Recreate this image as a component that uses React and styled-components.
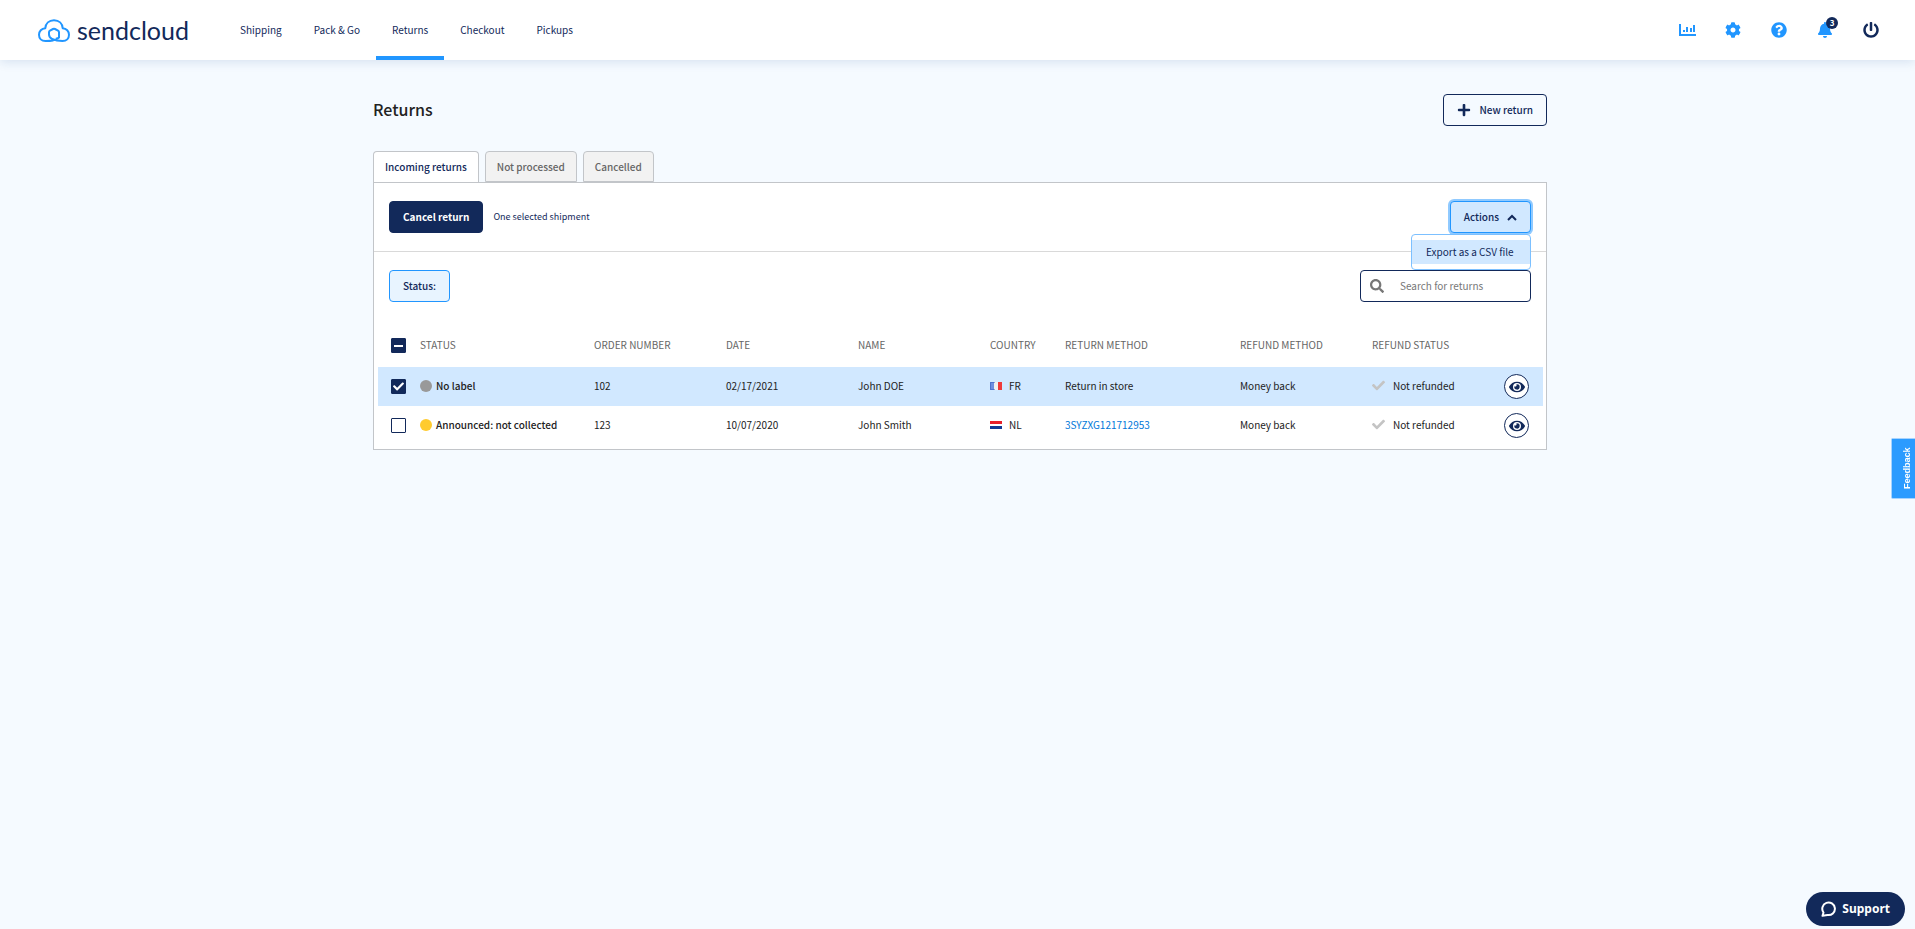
import React, { useEffect, useRef, useState } from "react";
import styled, { createGlobalStyle } from "styled-components";
import { FaCog, FaQuestionCircle, FaBell, FaPowerOff, FaPlus, FaSearch, FaEye, FaCheck } from "react-icons/fa";

const navy = "#12295a";
const blue = "#2196ff";
const paleBlue = "#d1e8ff";
const sans = '"Noto Sans CJK SC", "Noto Sans", sans-serif';

const GlobalStyle = createGlobalStyle`
  * { box-sizing: border-box; }
  body {
    margin: 0;
    background: #f5faff;
    color: #222;
    font: 10px/16px ${sans};
  }
  button, input { font: inherit; color: inherit; margin: 0; }
`;

const Header = styled.header`
  display: flex;
  align-items: center;
  height: 60px;
  padding: 0 32px 0 38px;
  background: #fff;
  box-shadow: 0 2px 10px rgba(30, 80, 150, 0.14);
`;

const Logo = styled.a`
  display: flex;
  align-items: center;
  gap: 7px;
  width: 186px;
  color: ${navy};
  font: 25px/30px Lato, sans-serif;
  text-decoration: none;
`;

const Nav = styled.nav`
  display: flex;
  height: 100%;
`;

const NavLink = styled.a`
  display: flex;
  align-items: center;
  padding: 4px 16px 0;
  border-bottom: 4px solid ${(p) => (p.$active ? blue : "transparent")};
  color: ${navy};
  text-decoration: none;
`;

const Tools = styled.div`
  display: flex;
  gap: 22px;
  margin-left: auto;
`;

const IconButton = styled.button`
  position: relative;
  display: grid;
  place-items: center;
  width: 24px;
  height: 24px;
  padding: 0;
  border: 0;
  background: none;
  color: ${(p) => (p.$dark ? navy : blue)};
`;

const Badge = styled.span`
  position: absolute;
  top: -1px;
  right: -1px;
  width: 12px;
  height: 12px;
  border-radius: 50%;
  background: ${navy};
  color: #fff;
  font-size: 8px;
  font-weight: 700;
  line-height: 12px;
  text-align: center;
`;

const Main = styled.main`
  max-width: 1179px;
  margin: 0 auto;
  padding: 34px 0 0 5px;
`;

const TitleRow = styled.div`
  display: flex;
  align-items: center;
  justify-content: space-between;
  margin-bottom: 25px;
`;

const Title = styled.h1`
  margin: 0;
  padding-bottom: 2px;
  font-size: 16px;
  line-height: 24px;
  font-weight: 500;
`;

const Button = styled.button`
  display: inline-flex;
  align-items: center;
  gap: 8px;
  height: 32px;
  padding: 0 13px;
  border: 1px solid ${navy};
  border-radius: 4px;
  background: transparent;
  color: ${navy};
  font-weight: 500;
`;

const PrimaryButton = styled(Button)`
  background: ${navy};
  color: #fff;
  font-weight: 700;
`;

const FilterButton = styled(Button)`
  border-color: ${blue};
  background: #e8f4ff;
`;

const ActionsButton = styled(Button)`
  border-color: ${blue};
  background: ${paleBlue};
  box-shadow: 0 0 0 2px #90caff;
`;

const Tabs = styled.div`
  display: flex;
  gap: 6px;
`;

const Tab = styled.button`
  height: 31px;
  padding: 0 11px;
  border: 1px solid #c2c5c9;
  border-bottom: ${(p) => (p.$active ? "0" : "1px solid #c2c5c9")};
  border-radius: 4px 4px 0 0;
  background: ${(p) => (p.$active ? "#fff" : "#f2f2f2")};
  color: ${(p) => (p.$active ? navy : "#666")};
  font-weight: 500;
`;

const Panel = styled.section`
  border: 1px solid #c2c5c9;
  background: #fff;
`;

const Toolbar = styled.div`
  display: flex;
  align-items: center;
  gap: 10px;
  padding: 18px 15px;
  border-bottom: ${(p) => (p.$divided ? "1px solid #d9d9d9" : "0")};
`;

const Selection = styled.span`
  color: ${navy};
  font-size: 9px;
`;

const Dropdown = styled.div`
  position: relative;
  margin-left: auto;
`;

const Menu = styled.div`
  position: absolute;
  top: 33px;
  right: 0;
  padding: 5px 0;
  border: 1px solid #7cc0ff;
  border-radius: 4px;
  background: #fff;
`;

const MenuItem = styled.button`
  display: block;
  width: 118px;
  height: 24px;
  padding: 0 14px;
  border: 0;
  background: ${paleBlue};
  color: ${navy};
  text-align: left;
  white-space: nowrap;
`;

const SearchField = styled.label`
  display: flex;
  align-items: center;
  gap: 16px;
  width: 171px;
  height: 32px;
  margin-left: auto;
  padding: 0 9px;
  border: 1px solid ${navy};
  border-radius: 4px;
  background: #fff;
  color: #777;
  svg { flex-shrink: 0; }
`;

const SearchInput = styled.input`
  flex: 1;
  min-width: 0;
  padding: 0;
  border: 0;
  outline: 0;
  background: none;
  &::placeholder { color: #777; opacity: 1; }
`;

const TableWrap = styled.div`
  padding: 4px 3px 4px 4px;
`;

const Table = styled.table`
  width: 100%;
  table-layout: fixed;
  border-collapse: collapse;
`;

const ControlHead = styled.th`
  height: 43px;
  padding: 0;
`;

const HeadCell = styled.th`
  height: 43px;
  padding: 0 0 2px;
  color: #666;
  font-weight: 400;
  text-align: left;
  text-transform: uppercase;
`;

const Row = styled.tr`
  background: ${(p) => (p.$selected ? paleBlue : "transparent")};
`;

const ControlCell = styled.td`
  height: 39px;
  padding: 0;
`;

const Cell = styled.td`
  height: 39px;
  padding: 0 0 2px;
  font-weight: ${(p) => (p.$strong ? 500 : 400)};
  white-space: nowrap;
`;

const Inline = styled.span`
  display: flex;
  align-items: center;
  gap: ${(p) => p.$gap}px;
`;

const Dot = styled.span`
  width: 12px;
  height: 12px;
  border-radius: 50%;
  background: ${(p) => p.$color};
`;

const CheckWrap = styled.span`
  position: relative;
  display: grid;
  place-items: center;
  width: 15px;
  height: 15px;
  margin-left: 13px;
  color: #fff;
  svg { position: absolute; pointer-events: none; }
`;

const CheckInput = styled.input`
  appearance: none;
  width: 15px;
  height: 15px;
  border: 1px solid ${navy};
  border-radius: 1px;
  background: #fff;
  &:checked, &:indeterminate { background: ${navy}; }
`;

const TrackingLink = styled.a`
  color: #0077d9;
  text-decoration: none;
`;

const ViewButton = styled.button`
  display: grid;
  place-items: center;
  width: 25px;
  height: 25px;
  padding: 0;
  border: 1px solid ${navy};
  border-radius: 50%;
  background: #fff;
  color: ${navy};
`;

const Feedback = styled.button`
  position: fixed;
  right: 0;
  top: 438px;
  width: 24px;
  height: 61px;
  padding: 0 8px 0 0;
  border: 1px solid #a6d3ff;
  border-left: 0;
  border-radius: 0 2px 2px 0;
  background: #2b9bff;
  color: #fff;
  font: 700 9px/15px "Liberation Sans", sans-serif;
  writing-mode: vertical-rl;
  rotate: 180deg;
`;

const Support = styled.button`
  position: fixed;
  right: 10px;
  bottom: 3px;
  display: flex;
  align-items: center;
  gap: 6px;
  height: 34px;
  padding: 0 15px;
  border: 0;
  border-radius: 17px;
  background: ${navy};
  color: #fff;
  font: 700 12px/16px "Noto Sans", sans-serif;
`;

const CloudMark = () => (
  <svg width="32" height="23" viewBox="0 0 32 23" fill="none" stroke={blue} strokeWidth="2" strokeLinecap="round" strokeLinejoin="round" aria-hidden="true">
    <path d="M15 21.500C12.500 22 10 22 7.500 22C3.500 22 1 19.300 1 15.700C1 12.300 3.600 9.400 7.300 9.200C7.600 4.500 11 1.200 16 1.200C21 1.200 24.400 4.500 24.700 9.200C28.400 9.400 31 12.300 31 15.700C31 19.300 28.500 22 24.500 22C21 22 17 21.300 14 19.800C12 18.800 11 17.500 11 15.500V13.200Q11 12.200 12 11.600L15 10Q16 9.500 17 10L20 11.600Q21 12.200 21 13.200V18.500Q20 19.500 18.500 19.500" />
  </svg>
);

const ChartIcon = () => (
  <svg width="17" height="13" viewBox="0 0 17 13" fill="currentColor" aria-hidden="true">
    <path d="M0 0h2v10h15v2H0zM4 6h2v2H4zM7 3h2v5H7zM11 4h2v4h-2zM14 1h2v7h-2z" />
  </svg>
);

const ChevronUp = () => (
  <svg width="10" height="7" viewBox="0 0 10 7" fill="none" stroke="currentColor" strokeWidth="2" aria-hidden="true">
    <path d="M1 6l4-4 4 4" />
  </svg>
);

const BubbleIcon = () => (
  <svg width="15" height="16" viewBox="0 0 15 16" fill="none" stroke="currentColor" strokeWidth="2" strokeLinejoin="round" aria-hidden="true">
    <path d="M1.500 14.800L2.500 11.500A6.300 6.300 0 1 1 6.500 14Z" />
  </svg>
);

const Flag = ({ code }) => (
  <svg width="12" height="8" viewBox="0 0 12 8" aria-hidden="true">
    {code === "FR" ? (
      <>
        <path fill="#6f8fe0" d="M0 0h4v8H0z" />
        <path fill="#f0f0f0" d="M4 0h4v8H4z" />
        <path fill="#ef3b3b" d="M8 0h4v8H8z" />
        <path fill="none" stroke="#3157b8" strokeOpacity="0.5" d="M5 .5H.5v7H5" />
      </>
    ) : (
      <>
        <path fill="#e8202a" d="M0 0h12v3H0z" />
        <path fill="#fff" d="M0 3h12v2H0z" />
        <path fill="#123a94" d="M0 5h12v3H0z" />
      </>
    )}
  </svg>
);

function Checkbox({ label, indeterminate = false, checked, onChange }) {
  const ref = useRef(null);
  useEffect(() => {
    ref.current.indeterminate = indeterminate;
  }, [indeterminate]);
  return (
    <CheckWrap>
      <CheckInput ref={ref} type="checkbox" aria-label={label} checked={checked} onChange={onChange} />
      {indeterminate && (
        <svg width="9" height="2"><path d="M0 0h9v2H0z" fill="currentColor" /></svg>
      )}
      {checked && !indeterminate && <FaCheck size={11} />}
    </CheckWrap>
  );
}

const navItems = ["Shipping", "Pack & Go", "Returns", "Checkout", "Pickups"];
const tabItems = ["Incoming returns", "Not processed", "Cancelled"];
const columnWidths = [42, 174, 132, 132, 132, 75, 175, 132, 132, 39];
const columns = ["Status", "Order number", "Date", "Name", "Country", "Return method", "Refund method", "Refund status"];
const returns = [
  { color: "#999", status: "No label", order: "102", date: "02/17/2021", name: "John DOE", country: "FR", method: "Return in store" },
  { color: "#ffcb2e", status: "Announced: not collected", order: "123", date: "10/07/2020", name: "John Smith", country: "NL", tracking: "3SYZXG121712953" },
];

export default function App() {
  const [selected, setSelected] = useState(["102"]);
  const all = selected.length === returns.length;
  const toggle = (id) =>
    setSelected((s) => (s.includes(id) ? s.filter((x) => x !== id) : [...s, id]));

  return (
    <>
      <GlobalStyle />
      <Header>
        <Logo href="#home"><CloudMark />sendcloud</Logo>
        <Nav>
          {navItems.map((item) => (
            <NavLink key={item} href="#nav" $active={item === "Returns"}>{item}</NavLink>
          ))}
        </Nav>
        <Tools>
          <IconButton aria-label="Analytics"><ChartIcon /></IconButton>
          <IconButton aria-label="Settings"><FaCog size={16} /></IconButton>
          <IconButton aria-label="Help"><FaQuestionCircle size={16} /></IconButton>
          <IconButton aria-label="Notifications"><FaBell size={16} /><Badge>3</Badge></IconButton>
          <IconButton aria-label="Log out" $dark><FaPowerOff size={16} /></IconButton>
        </Tools>
      </Header>

      <Main>
        <TitleRow>
          <Title>Returns</Title>
          <Button><FaPlus size={14} />New return</Button>
        </TitleRow>
        <Tabs role="tablist">
          {tabItems.map((item, i) => (
            <Tab key={item} role="tab" aria-selected={i === 0} $active={i === 0}>{item}</Tab>
          ))}
        </Tabs>
        <Panel>
          <Toolbar $divided>
            <PrimaryButton>Cancel return</PrimaryButton>
            <Selection>One selected shipment</Selection>
            <Dropdown>
              <ActionsButton aria-expanded="true">Actions<ChevronUp /></ActionsButton>
              <Menu role="menu"><MenuItem role="menuitem">Export as a CSV file</MenuItem></Menu>
            </Dropdown>
          </Toolbar>
          <Toolbar>
            <FilterButton>Status:</FilterButton>
            <SearchField>
              <FaSearch size={14} />
              <SearchInput type="text" aria-label="Search for returns" placeholder="Search for returns" />
            </SearchField>
          </Toolbar>
          <TableWrap>
            <Table>
              <colgroup>
                {columnWidths.map((w, i) => <col key={i} width={w} />)}
              </colgroup>
              <thead>
                <tr>
                  <ControlHead>
                    <Checkbox
                      label="Select all"
                      checked={all}
                      indeterminate={selected.length > 0 && !all}
                      onChange={() => setSelected(all ? [] : returns.map((r) => r.order))}
                    />
                  </ControlHead>
                  {columns.map((c) => <HeadCell key={c} scope="col">{c}</HeadCell>)}
                  <ControlHead />
                </tr>
              </thead>
              <tbody>
                {returns.map((r) => (
                  <Row key={r.order} $selected={selected.includes(r.order)}>
                    <ControlCell>
                      <Checkbox label={`Select order ${r.order}`} checked={selected.includes(r.order)} onChange={() => toggle(r.order)} />
                    </ControlCell>
                    <Cell $strong><Inline $gap={4}><Dot $color={r.color} />{r.status}</Inline></Cell>
                    <Cell>{r.order}</Cell>
                    <Cell>{r.date}</Cell>
                    <Cell>{r.name}</Cell>
                    <Cell><Inline $gap={7}><Flag code={r.country} />{r.country}</Inline></Cell>
                    <Cell>{r.tracking ? <TrackingLink href="#tracking">{r.tracking}</TrackingLink> : r.method}</Cell>
                    <Cell>Money back</Cell>
                    <Cell><Inline $gap={8}><FaCheck size={13} color="#c4c4c4" />Not refunded</Inline></Cell>
                    <ControlCell><ViewButton aria-label={`View order ${r.order}`}><FaEye size={16} /></ViewButton></ControlCell>
                  </Row>
                ))}
              </tbody>
            </Table>
          </TableWrap>
        </Panel>
      </Main>

      <Feedback>Feedback</Feedback>
      <Support><BubbleIcon />Support</Support>
    </>
  );
}
